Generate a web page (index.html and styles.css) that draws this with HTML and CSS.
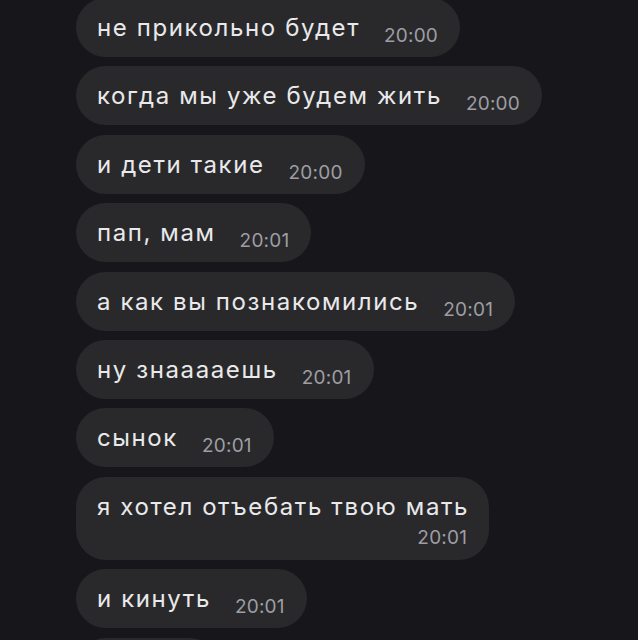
FILE: index.html
```html
<!DOCTYPE html>
<html lang="ru">
<head>
    <meta charset="UTF-8">
    <meta name="viewport" content="width=device-width, initial-scale=1.0">
    <title>Чат</title>
    <link rel="stylesheet" href="styles.css">
</head>
<body>
    <div class="chat">
        <div class="bubble">
            <span class="text">не прикольно будет</span>
            <span class="time">20:00</span>
        </div>
        <div class="bubble">
            <span class="text">когда мы уже будем жить</span>
            <span class="time">20:00</span>
        </div>
        <div class="bubble">
            <span class="text">и дети такие</span>
            <span class="time">20:00</span>
        </div>
        <div class="bubble">
            <span class="text">пап, мам</span>
            <span class="time">20:01</span>
        </div>
        <div class="bubble">
            <span class="text">а как вы познакомились</span>
            <span class="time">20:01</span>
        </div>
        <div class="bubble">
            <span class="text">ну знааааешь</span>
            <span class="time">20:01</span>
        </div>
        <div class="bubble">
            <span class="text">сынок</span>
            <span class="time">20:01</span>
        </div>
        <div class="bubble bubble-wrap">
            <span class="text">я хотел отъебать твою мать</span>
            <span class="time">20:01</span>
        </div>
        <div class="bubble">
            <span class="text">и кинуть</span>
            <span class="time">20:01</span>
        </div>
        <!-- next message, only its top edge is on screen -->
        <div class="bubble bubble-cut"></div>
    </div>
</body>
</html>
```

FILE: styles.css
```css
html, body {
    height: 100%;
}
body {
    margin: 0;
    overflow: hidden;
    background-color: #17161a;
    font-family: Inter, "Noto Sans", sans-serif;
}
.chat {
    display: flex;
    flex-direction: column;
    align-items: flex-start;
    gap: 9.4px;
    margin-top: -2px;
    padding-left: 76px;
}
.bubble {
    display: flex;
    align-items: flex-end;
    padding: 15px 22px 15px 21px;
    background-color: #29292c;
    border-radius: 30px;
}
.bubble .text {
    font-size: 24px;
    line-height: 29px;
    letter-spacing: 1.6px;
    color: #e9e9eb;
    white-space: nowrap;
}
.bubble .time {
    margin-left: 24px;
    margin-bottom: -3px;
    font-size: 19px;
    line-height: 19px;
    letter-spacing: 0.2px;
    color: #9e9ea3;
}
.bubble-wrap {
    flex-direction: column;
    padding-right: 20px;
}
.bubble-wrap .time {
    align-self: flex-end;
    margin-top: 7px;
    margin-bottom: -2px;
    margin-right: 2px;
}
.bubble-cut {
    width: 100px;
    height: 29px;
}
```
